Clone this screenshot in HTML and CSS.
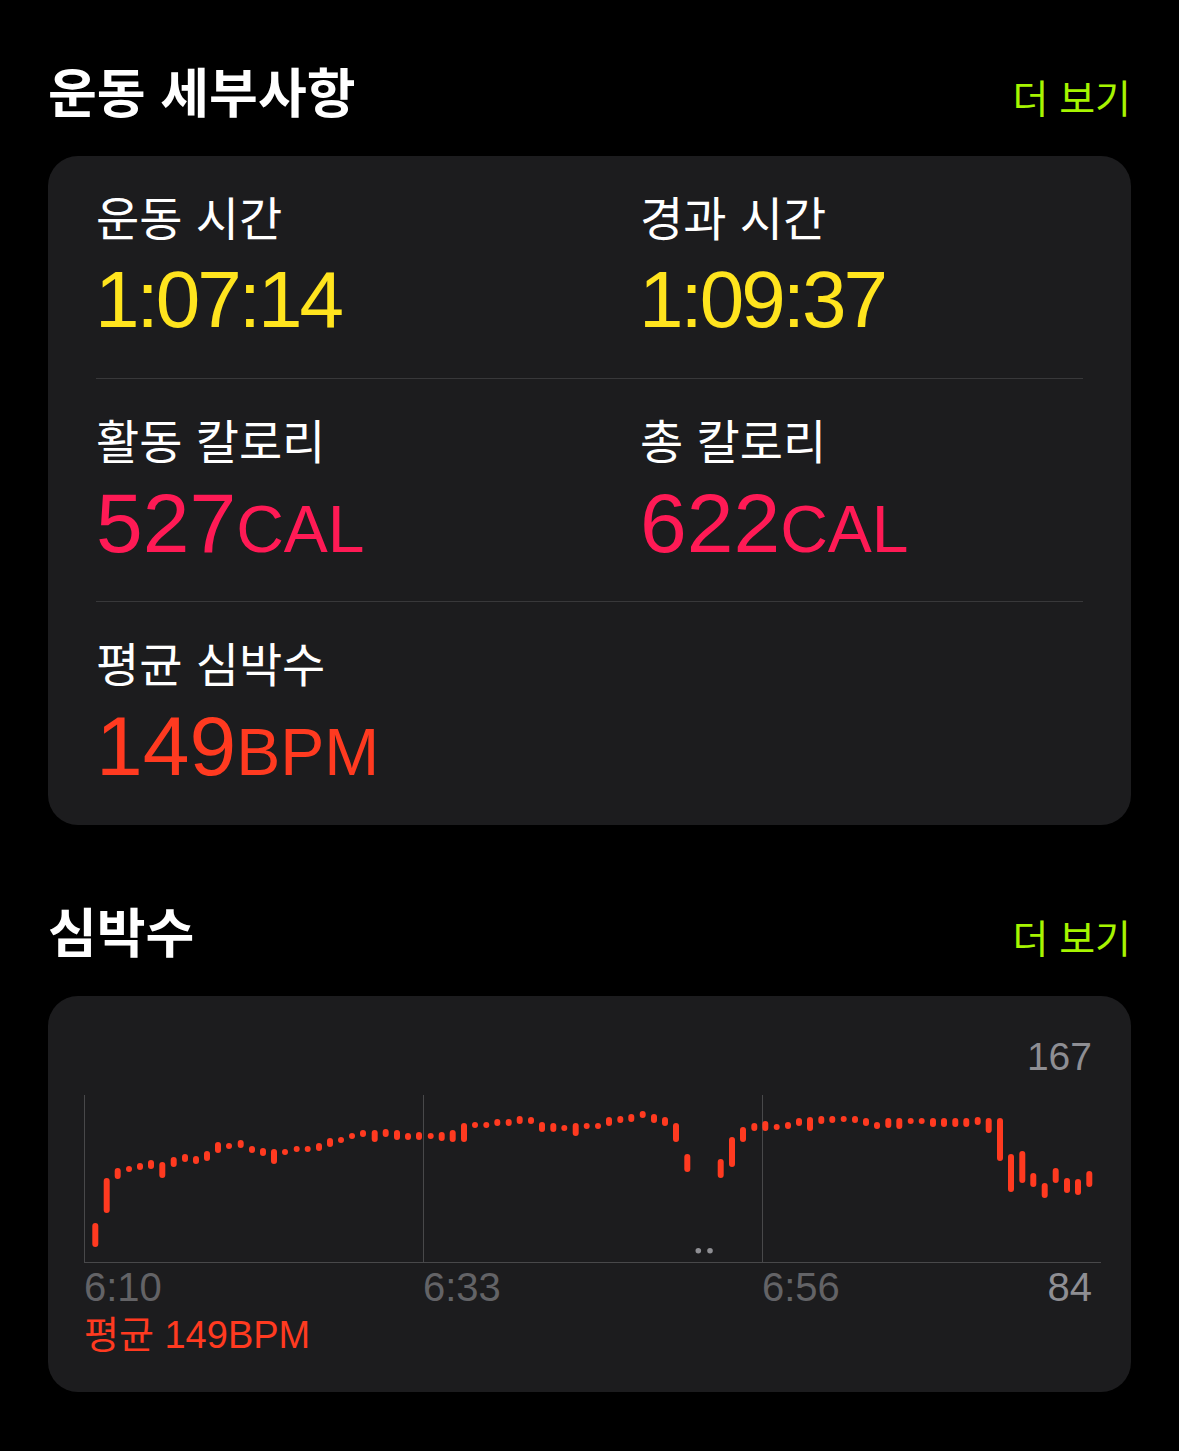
FILE: index.html
```html
<!DOCTYPE html>
<html lang="ko">
<head>
    <meta charset="UTF-8">
    <meta name="viewport" content="width=device-width, initial-scale=1.0">
    <title>운동 세부사항</title>
    <link rel="stylesheet" href="styles.css">
</head>
<body>
    <div class="page">
        <div class="section-head">
            <h2>운동 세부사항</h2>
            <a class="more" href="#">더 보기</a>
        </div>

        <div class="card details">
            <div class="row">
                <div class="stat">
                    <div class="label">운동 시간</div>
                    <div class="value time">1:07:14</div>
                </div>
                <div class="stat">
                    <div class="label">경과 시간</div>
                    <div class="value time">1:09:37</div>
                </div>
            </div>
            <div class="row">
                <div class="stat">
                    <div class="label">활동 칼로리</div>
                    <div class="value cal">527<span class="unit">CAL</span></div>
                </div>
                <div class="stat">
                    <div class="label">총 칼로리</div>
                    <div class="value cal">622<span class="unit">CAL</span></div>
                </div>
            </div>
            <div class="row">
                <div class="stat">
                    <div class="label">평균 심박수</div>
                    <div class="value bpm">149<span class="unit">BPM</span></div>
                </div>
            </div>
        </div>

        <div class="section-head second">
            <h2>심박수</h2>
            <a class="more" href="#">더 보기</a>
        </div>

        <div class="card chart-card">
            <div class="max-label">167</div>
            <svg id="hr-chart" class="chart" width="1017" height="168" viewBox="84 1095 1017 168">
                <g class="grid">
                    <line x1="84.5" y1="1095" x2="84.5" y2="1263"></line>
                    <line x1="423.5" y1="1095" x2="423.5" y2="1263"></line>
                    <line x1="762.5" y1="1095" x2="762.5" y2="1263"></line>
                    <line x1="84" y1="1262.5" x2="1101" y2="1262.5"></line>
                </g>
                <circle class="gap-dot" cx="698.3" cy="1250.7" r="2.8"></circle>
                <circle class="gap-dot" cx="710" cy="1250.7" r="2.8"></circle>
                <g id="bars"></g>
            </svg>
            <div class="axis">
                <span>6:10</span>
                <span>6:33</span>
                <span class="last">6:56<span class="min-label">84</span></span>
            </div>
            <div class="avg">평균 149BPM</div>
        </div>
    </div>

    <script>
        // 심박수 막대: [x 중심, 위, 아래]
        const samples = [
            [95.3,1223,1247],[106.7,1178,1213],[117.7,1168,1179],[129,1166,1172],[140,1163,1170],
            [151,1160,1169],[162.3,1162,1178],[173.7,1157,1167],[185,1154,1162],[196,1156,1164],
            [207,1151,1161],[218,1142,1153],[229,1143,1149],[240.7,1140,1148],[252,1146,1153],
            [263,1148,1156],[274,1149,1164],[285,1149,1154],[296.7,1146,1152],[307.7,1146,1152],
            [319,1143,1151],[330,1138,1147],[341,1137,1143],[352,1133,1139],[363,1130,1137],
            [374.7,1130,1142],[385.7,1129,1137],[397,1130,1140],[408,1133,1140],[419,1132,1140],
            [430.7,1133,1139],[441.7,1132,1141],[452.7,1130,1142],[464,1123,1142],[475,1122,1128],
            [486.3,1122,1128],[497.3,1119,1126],[508.7,1119,1126],[519.7,1116,1124],[531,1117,1124],
            [542,1122,1132],[553.3,1123,1132],[564.3,1125,1131],[575.7,1123,1136],[586.7,1123,1129],
            [598,1123,1129],[609,1117,1126],[620.3,1116,1123],[631.3,1114,1122],[642.7,1111,1118],
            [654,1114,1123],[665,1117,1126],[676,1123,1142],[687.3,1154,1172],
            [720.7,1159,1178],[732,1137,1167],[743,1127,1142],[754.3,1123,1131],[765.3,1121,1131],
            [776.7,1124,1129],[788,1122,1129],[799,1118,1126],[810,1117,1131],[821.3,1116,1124],
            [832.3,1116,1123],[843.7,1116,1121],[855,1116,1123],[866,1118,1126],[877,1122,1129],
            [888.3,1118,1128],[899.3,1118,1129],[910.7,1118,1124],[921.7,1118,1124],[933,1118,1127],
            [944,1118,1127],[955.3,1118,1127],[966.3,1118,1127],[977.7,1117,1125],[988.7,1118,1133],
            [1000,1118,1161],[1011,1154,1192],[1022.3,1151,1183],[1033.3,1173,1187],[1044.7,1183,1198],
            [1055.7,1168,1183],[1067,1178,1193],[1078,1179,1195],[1089.3,1171,1187]
        ];

        const bars = document.getElementById('bars');
        samples.forEach(function (s) {
            const rect = document.createElementNS('http://www.w3.org/2000/svg', 'rect');
            rect.setAttribute('x', s[0] - 3);
            rect.setAttribute('y', s[1]);
            rect.setAttribute('width', 6);
            rect.setAttribute('height', Math.max(s[2] - s[1], 6));
            rect.setAttribute('rx', 3);
            rect.setAttribute('class', 'bar');
            bars.appendChild(rect);
        });
    </script>
</body>
</html>
```

FILE: styles.css
```css
body {
    margin: 0;
    background-color: #000;
    color: #fff;
    font-family: "Liberation Sans", "Noto Sans CJK KR", sans-serif;
}
.page {
    padding: 60px 48px 40px;
}
.section-head {
    display: flex;
    justify-content: space-between;
    align-items: baseline;
    margin-bottom: 35px;
}
.section-head.second {
    margin-top: 75px;
}
.section-head h2 {
    margin: 0;
    font-family: "Noto Sans CJK KR", sans-serif;
    font-size: 53px;
    line-height: 61px;
    font-weight: 700;
}
.more {
    font-family: "Noto Sans CJK KR", sans-serif;
    font-size: 39px;
    line-height: 44px;
    color: #a6f500;
    text-decoration: none;
}
.card {
    background-color: #1c1c1e;
    border-radius: 30px;
}

/* 운동 세부사항 */
.details {
    padding: 0 48px;
}
.row {
    display: grid;
    grid-template-columns: 544px 1fr;
    padding: 34px 0 36px;
}
.row + .row {
    border-top: 1px solid #38383a;
}
.row:last-child {
    padding-bottom: 37px;
}
.label {
    font-family: "Noto Sans CJK KR", sans-serif;
    font-size: 47px;
    line-height: 52px;
}
.value {
    margin-top: 16px;
    font-size: 84px;
    line-height: 84px;
}
.value .unit {
    font-size: 66px;
    line-height: 1;
}
.time {
    font-size: 80px;
    color: #ffe41e;
    letter-spacing: -3px;
    margin-left: -1px;
}
.cal {
    color: #ff1a55;
}
.bpm {
    color: #ff3a20;
}

/* 심박수 차트 */
.chart-card {
    padding: 39px 30px 35px 36px;
}
.max-label {
    text-align: right;
    padding-right: 9px;
    font-size: 39px;
    line-height: 44px;
    color: #8e8e93;
}
.chart {
    display: block;
    margin-top: 16px;
}
.grid line {
    stroke: #48484a;
    stroke-width: 1;
}
.gap-dot {
    fill: #8e8e93;
}
.bar {
    fill: #ff3a20;
}
.axis {
    display: grid;
    grid-template-columns: 339px 339px 1fr;
    margin-top: 2px;
    font-size: 40px;
    line-height: 44px;
    color: #636366;
}
.axis .last {
    display: flex;
    justify-content: space-between;
    padding-right: 9px;
}
.min-label {
    color: #8e8e93;
}
.avg {
    margin-top: 4px;
    font-size: 38px;
    line-height: 44px;
    color: #ff3a20;
}
```
